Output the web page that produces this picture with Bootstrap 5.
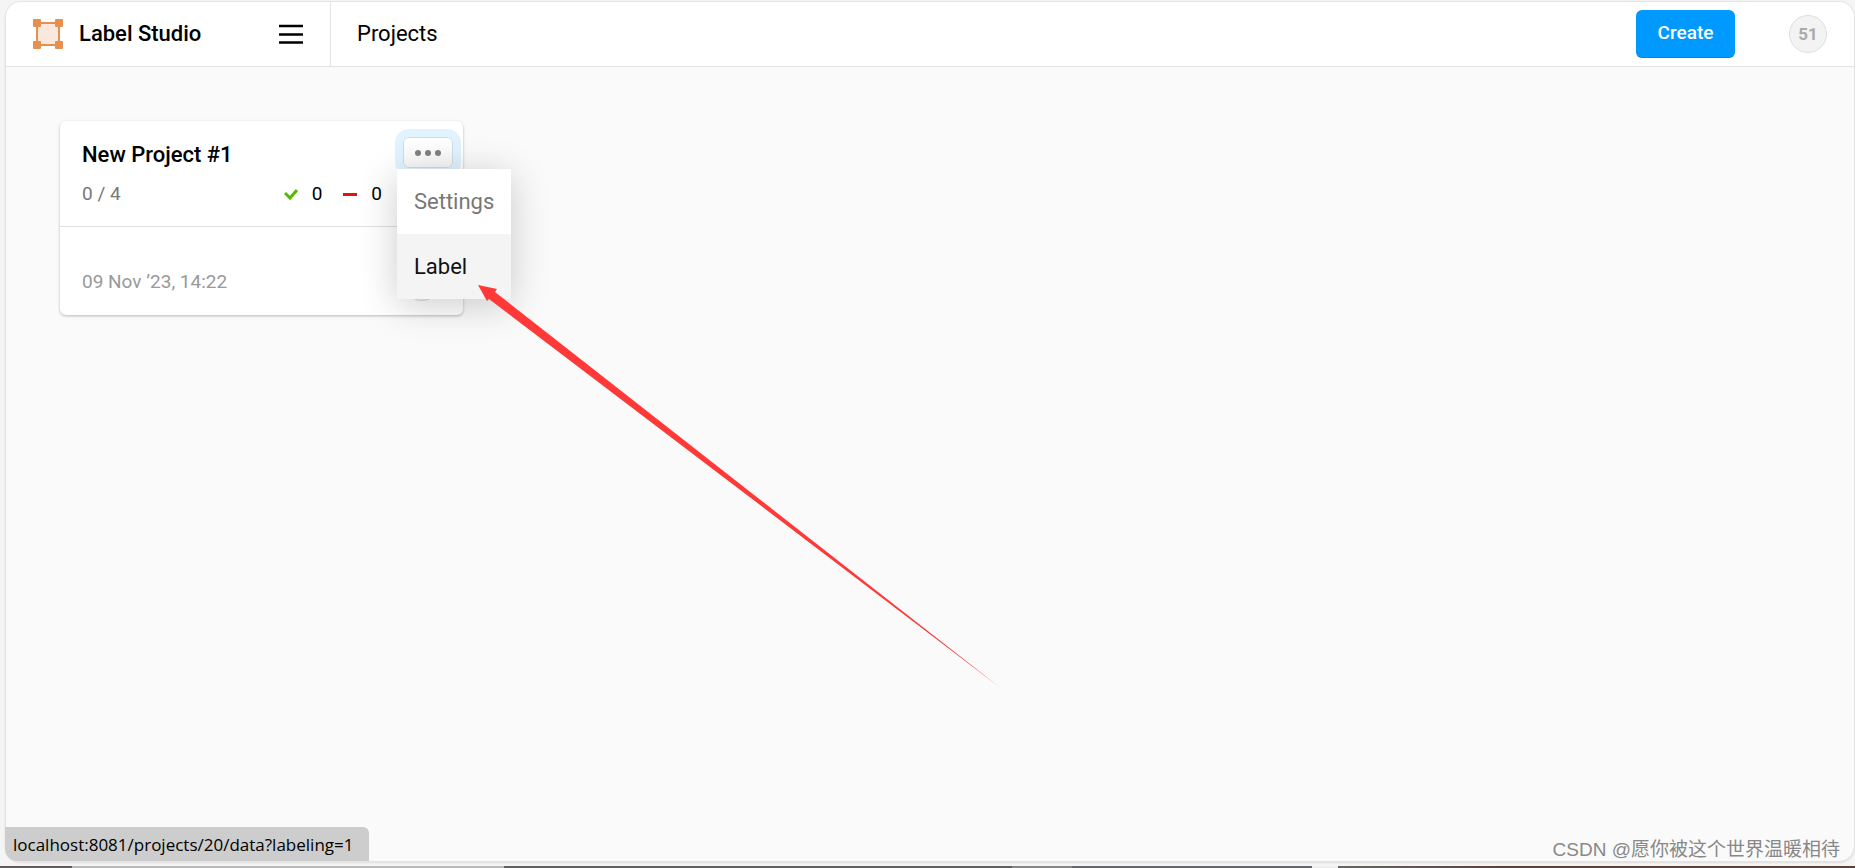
<!DOCTYPE html>
<html lang="en">
<head>
<meta charset="utf-8">
<meta name="viewport" content="width=device-width, initial-scale=1">
<title>Label Studio</title>
<link href="https://cdn.jsdelivr.net/npm/bootstrap@5.3.0/dist/css/bootstrap.min.css" rel="stylesheet">
<script src="https://cdn.jsdelivr.net/npm/bootstrap@5.3.0/dist/js/bootstrap.bundle.min.js" defer></script>
<style>
body{font-family:Roboto,"Liberation Sans",sans-serif;font-size:19px;line-height:24px;color:#000;background:#f5f5f5}
.window-area{padding:1px 0 0 5px}
.app-panel{background:#fafafa;border:1px solid #e3e3e3;border-radius:16px;overflow:hidden;box-shadow:0 1px 2px #ddd}
.app-bar{height:65px;background:#fff;border-bottom:1px solid #e3e3e3}
.brand-area{width:325px;padding:0 27px;border-right:1px solid #e3e3e3}
.brand-link{font-size:22px;font-weight:500;color:#000;gap:16px}
.page-name{font-size:22px;padding-left:26px}
.menu-toggle{line-height:0}
.create-btn{width:99px;height:48px;font-size:19px;font-weight:500;color:#fff;background:#09f;border-radius:6px;box-shadow:inset 0 -1px 0 #0002;padding:0 0 2px}
.create-btn:hover{color:#fff;background:#08e}
.user-circle{width:38px;height:38px;border:1px solid #ddd;background:#f3f3f3;color:#aaa;font-size:17px;font-weight:700}
.bar-user{margin:0 27px 0 54px}
.project-area{padding:54px}
.project-card{width:403px;background:#fff;border-radius:6px;box-shadow:0 1px 3px #0004}
.card-top{height:106px;padding:6px 10px 0 22px;border-bottom:1px solid #e0e0e0}
.project-name{font-size:22px;font-weight:500;line-height:30px;margin:13px 0 0}
.more-btn{width:50px;height:31px;background:linear-gradient(#fff,#f7f7f7);border:1px solid #ccdde8;border-radius:6px;box-shadow:0 0 0 8px #e0f3ff;margin-top:10px;line-height:0}
.card-stats{margin-top:12px;padding-right:71px}
.stat-item{gap:14px}
.stat-item + .stat-item{margin-left:21px}
.done-count{color:#777}
.card-base{height:88px;padding:0 22px 14px;color:#999}
.card-base .user-circle{margin-left:auto}
.date-line{line-height:38px}
.action-menu{position:absolute;top:48px;right:-48px;width:114px;background:#fff;box-shadow:0 6px 36px #0003;z-index:2}
.action-menu a{display:block;font-size:22px;line-height:65px;padding:0 17px;color:#777;text-decoration:none}
.action-menu a.current{background:#f4f4f4;color:#111}
.pointer-arrow{position:absolute;left:478px;top:285px;z-index:3;pointer-events:none}
.link-status{position:absolute;left:5px;bottom:7px;height:34px;padding:0 16px 0 8px;background:#cdcdcd;border-radius:0 6px 0 12px;font:17px/35px "Open Sans","Noto Sans",sans-serif}
.watermark{position:absolute;right:15px;bottom:4px;font:19px/28px "Liberation Sans","Noto Sans CJK SC",sans-serif;color:#888}
.taskbar-edge{height:2px;background:linear-gradient(90deg,#5f5b5d 72px,#bbb 72px 504px,#5f5f5f 504px 1012px,#858585 1012px 1072px,#66676a 1072px 1312px,#eee 1312px 1338px,#666 1338px,#5d403a 1500px)}
</style>
</head>
<body class="vh-100 overflow-hidden position-relative d-flex flex-column">
<div class="window-area flex-grow-1 d-flex flex-column pb-1">
<div class="app-panel flex-grow-1">
<header class="app-bar d-flex align-items-center">
  <div class="brand-area h-100 d-flex align-items-center justify-content-between">
    <a href="#" class="brand-link d-flex align-items-center text-decoration-none">
      <svg width="30" height="30" viewBox="0 0 30 30"><path d="M4 4h22v22H4z" fill="#fbe8dc" stroke="#e58f51" stroke-width="2"/><g fill="#e58f51"><rect width="8" height="8" rx="1"/><rect x="22" width="8" height="8" rx="1"/><rect y="22" width="8" height="8" rx="1"/><rect x="22" y="22" width="8" height="8" rx="1"/></g></svg>
      <span>Label Studio</span></a>
    <button class="menu-toggle btn p-0 border-0" aria-label="Menu"><svg width="24" height="20"><path d="M0 2h24M0 10.500h24M0 18.500h24" stroke="#000" stroke-width="2.500"/></svg></button>
  </div>
  <div class="page-name flex-grow-1">Projects</div>
  <button class="create-btn btn border-0">Create</button>
  <div class="user-circle bar-user rounded-circle d-flex align-items-center justify-content-center">51</div>
</header>
<main class="project-area">
  <article class="project-card position-relative">
    <div class="card-top">
      <div class="d-flex justify-content-between align-items-start">
        <h2 class="project-name">New Project #1</h2>
        <button class="more-btn p-0" aria-label="Project actions"><svg width="26" height="6" fill="#808080"><circle cx="3" cy="3" r="3"/><circle cx="13" cy="3" r="3"/><circle cx="23" cy="3" r="3"/></svg></button>
      </div>
      <div class="card-stats d-flex align-items-center">
        <span class="done-count me-auto">0 / 4</span>
        <span class="stat-item d-flex align-items-center"><svg width="14" height="11"><path d="M1 4l5 5 7-8" fill="none" stroke="#5b0" stroke-width="3"/></svg>0</span>
        <span class="stat-item d-flex align-items-center"><svg width="14" height="3"><path d="M0 0h14v3H0z" fill="#e41313"/></svg>0</span>
      </div>
    </div>
    <div class="card-base d-flex align-items-end"><span class="date-line">09 Nov ’23, 14:22</span><span class="user-circle rounded-circle"></span></div>
    <nav class="action-menu"><a href="#">Settings</a><a href="#" class="current">Label</a></nav>
  </article>
</main>
</div>
</div>
<div class="taskbar-edge"></div>
<svg class="pointer-arrow" width="523" height="404"><path d="M0 0l19 4-2 3L522 402.500 11 14l-2 2z" fill="#ff3838"/></svg>
<div class="link-status">localhost:8081/projects/20/data?labeling=1</div>
<div class="watermark">CSDN @愿你被这个世界温暖相待</div>
</body>
</html>
